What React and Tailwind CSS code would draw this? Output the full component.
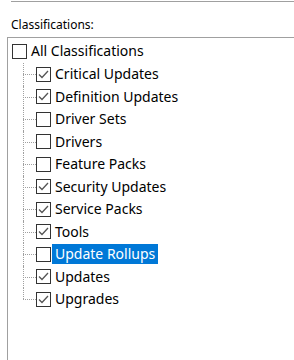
import React from "react";

const items = [
  { label: "Critical Updates", checked: true },
  { label: "Definition Updates", checked: true },
  { label: "Driver Sets", checked: false },
  { label: "Drivers", checked: false },
  { label: "Feature Packs", checked: false },
  { label: "Security Updates", checked: true },
  { label: "Service Packs", checked: true },
  { label: "Tools", checked: true },
  { label: "Update Rollups", checked: false, selected: true },
  { label: "Updates", checked: true },
  { label: "Upgrades", checked: true },
];

function Box({ checked }) {
  return (
    <div className="w-[15px] h-[15px] shrink-0 border border-[#333333] bg-white flex items-center justify-center">
      {checked && (
        <svg width="13" height="13" viewBox="0 0 13 13">
          <path d="M2 6.5 L5 9.5 L11 3" fill="none" stroke="#555555" strokeWidth="1.3" />
        </svg>
      )}
    </div>
  );
}

export default function App() {
  return (
    <div
      className="w-[294px] h-[360px] bg-white overflow-hidden text-black"
      style={{ fontFamily: '"Noto Sans", "Open Sans", sans-serif' }}
    >
      <div className="ml-[11px] mt-[1px] h-[2px] border-t border-[#a0a0a0] border-b-0" />
      <div className="pl-[11px] mt-[13px] h-[18px] text-[12px] leading-[18px]">Classifications:</div>
      <div className="ml-[7px] mt-[3px] h-[400px] border-l border-t border-[#a0a0a0]">
        <div className="pt-[2px]">
          <div className="h-[22px] flex items-center pl-[4px]">
            <Box checked={false} />
            <span className="ml-[1px] px-[3px] text-[14px] leading-[20px]">All Classifications</span>
          </div>
          <div className="pt-[1px]">
            {items.map((it, i) => {
              const last = i === items.length - 1;
              return (
                <div key={it.label} className="h-[22.5px] flex items-center pl-[15px]">
                  <div className="relative w-[13px] h-full shrink-0">
                    <div
                      className={
                        last
                          ? "h-1/2 border-l border-dotted border-[#a0a0a0]"
                          : "h-full border-l border-dotted border-[#a0a0a0]"
                      }
                    />
                    <div className="absolute left-0 right-0 top-1/2 border-t border-dotted border-[#a0a0a0]" />
                  </div>
                  <Box checked={it.checked} />
                  <span
                    className={
                      it.selected
                        ? "ml-[1px] px-[3px] h-[20px] text-[14px] leading-[20px] bg-[#0078d7] text-white"
                        : "ml-[1px] px-[3px] h-[20px] text-[14px] leading-[20px]"
                    }
                  >
                    {it.label}
                  </span>
                </div>
              );
            })}
          </div>
        </div>
      </div>
    </div>
  );
}
